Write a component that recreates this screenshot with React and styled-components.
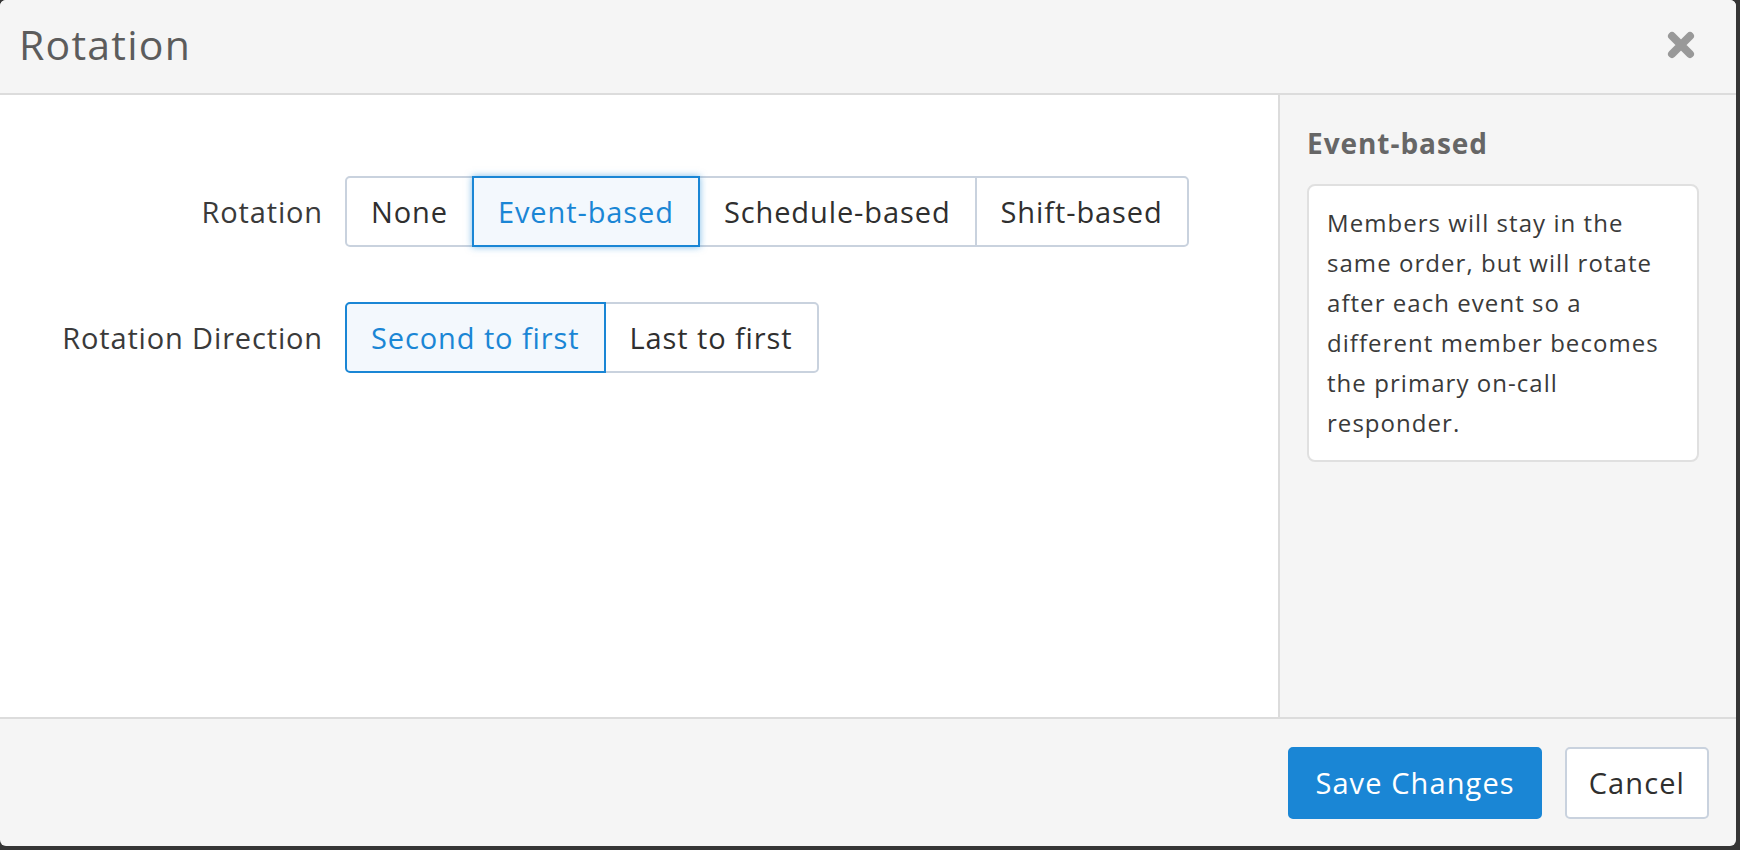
import React from "react";
import styled, { createGlobalStyle, css } from "styled-components";

const GlobalStyle = createGlobalStyle`
  html, body {
    margin: 0;
    padding: 0;
    background: #353535;
    font-family: "Open Sans", "Liberation Sans", sans-serif;
  }
`;

const Modal = styled.div`
  width: 1736px;
  height: 846px;
  background: #f5f5f5;
  border-radius: 6px;
  overflow: hidden;
  display: flex;
  flex-direction: column;
`;

const Header = styled.div`
  flex: 0 0 95px;
  box-sizing: border-box;
  display: flex;
  align-items: center;
  justify-content: space-between;
  padding: 0 40px 6px 19px;
  border-bottom: 2px solid #dcdcdc;
  background: #f5f5f5;
`;

const Title = styled.h1`
  margin: 0;
  font-size: 41px;
  font-weight: 400;
  color: #5c5c5c;
  letter-spacing: 1.25px;
`;

const Close = styled.button`
  background: none;
  border: 0;
  padding: 0;
  margin-top: 2px;
  width: 30px;
  height: 30px;
  display: flex;
  cursor: pointer;
`;

const Body = styled.div`
  flex: 1;
  display: flex;
  min-height: 0;
`;

const Main = styled.div`
  flex: 1;
  background: #fff;
  padding-top: 81px;
`;

const Form = styled.div`
  display: grid;
  grid-template-columns: 323px auto;
  column-gap: 22px;
  row-gap: 55px;
  align-items: center;
  justify-content: start;
`;

const Label = styled.div`
  text-align: right;
  font-size: 29px;
  color: #3a3a3a;
  letter-spacing: 0.85px;
`;

const Group = styled.div`
  display: inline-flex;
  justify-self: start;
`;

const Segment = styled.button`
  position: relative;
  height: 71px;
  padding: 0 24px;
  margin-left: -2px;
  font-family: inherit;
  font-size: 29px;
  letter-spacing: 0.9px;
  color: #2f2f2f;
  background: #fff;
  border: 2px solid #c9d2de;
  cursor: pointer;

  &:first-child {
    margin-left: 0;
    border-radius: 5px 0 0 5px;
  }
  &:last-child {
    border-radius: 0 5px 5px 0;
  }

  ${(p) =>
    p.$active &&
    css`
      z-index: 1;
      color: #1a86d5;
      background: #f3f8fd;
      border-color: #1a86d5;
    `}
  ${(p) =>
    p.$focus &&
    css`
      box-shadow: 0 0 7px rgba(26, 134, 213, 0.55);
      border-radius: 0 !important;
    `}
`;

const Sidebar = styled.div`
  flex: 0 0 458px;
  border-left: 2px solid #dcdcdc;
  background: #f5f5f5;
  padding: 28px 37px 0 27px;
  box-sizing: border-box;
`;

const SideTitle = styled.h3`
  margin: 0 0 21px;
  font-size: 28px;
  line-height: 40px;
  font-weight: 700;
  color: #666;
  letter-spacing: 0.95px;
`;

const Card = styled.div`
  background: #fff;
  border: 2px solid #e0e0e0;
  border-radius: 8px;
  padding: 17px 16px 17px 18px;
  font-size: 24px;
  line-height: 40px;
  color: #3a3a3a;
  letter-spacing: 1.05px;
  white-space: nowrap;
`;

const Footer = styled.div`
  flex: 0 0 127px;
  border-top: 2px solid #dcdcdc;
  display: flex;
  align-items: center;
  justify-content: flex-end;
  gap: 23px;
  padding: 0 27px 0 0;
`;

const FooterButton = styled.button`
  height: 72px;
  padding: 0 ${(p) => p.$pad}px;
  font-family: inherit;
  font-size: 29px;
  letter-spacing: 1.1px;
  border-radius: 5px;
  cursor: pointer;
  ${(p) =>
    p.$primary
      ? css`
          background: #1a86d5;
          color: #fff;
          border: 2px solid #1a86d5;
        `
      : css`
          background: #fff;
          color: #2f2f2f;
          border: 2px solid #c9d2de;
        `}
`;

const CloseIcon = () => (
  <svg width="30" height="30" viewBox="0 0 30 30">
    <path
      d="M6 6 L24 24 M24 6 L6 24"
      stroke="#999"
      strokeWidth="8"
      strokeLinecap="round"
      fill="none"
    />
  </svg>
);

const rotations = ["None", "Event-based", "Schedule-based", "Shift-based"];
const directions = ["Second to first", "Last to first"];

export default function App() {
  return (
    <>
      <GlobalStyle />
      <Modal>
        <Header>
          <Title>Rotation</Title>
          <Close aria-label="Close">
            <CloseIcon />
          </Close>
        </Header>
        <Body>
          <Main>
            <Form>
              <Label>Rotation</Label>
              <Group>
                {rotations.map((r) => (
                  <Segment
                    key={r}
                    $active={r === "Event-based"}
                    $focus={r === "Event-based"}
                  >
                    {r}
                  </Segment>
                ))}
              </Group>
              <Label>Rotation Direction</Label>
              <Group>
                {directions.map((d) => (
                  <Segment key={d} $active={d === "Second to first"}>
                    {d}
                  </Segment>
                ))}
              </Group>
            </Form>
          </Main>
          <Sidebar>
            <SideTitle>Event-based</SideTitle>
            <Card>
              Members will stay in the
              <br />
              same order, but will rotate
              <br />
              after each event so a
              <br />
              different member becomes
              <br />
              the primary on-call
              <br />
              responder.
            </Card>
          </Sidebar>
        </Body>
        <Footer>
          <FooterButton $primary $pad={25}>
            Save Changes
          </FooterButton>
          <FooterButton $pad={22}>Cancel</FooterButton>
        </Footer>
      </Modal>
    </>
  );
}
